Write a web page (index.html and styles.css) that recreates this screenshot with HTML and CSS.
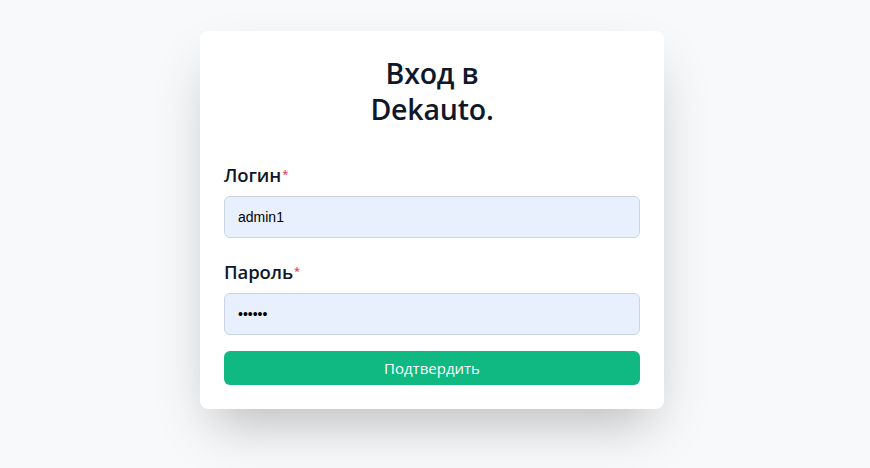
FILE: index.html
```html
<!DOCTYPE html>
<html lang="ru">
<head>
<meta charset="utf-8">
<title>Вход в Dekauto.</title>
<link rel="stylesheet" href="styles.css">
</head>
<body>
<main class="page">
  <form class="card">
    <h1 class="title">Вход в<br>Dekauto.</h1>
    <label class="label" for="login">Логин<span class="req">*</span></label>
    <input class="input" id="login" type="text" value="admin1">
    <label class="label label-second" for="pass">Пароль<span class="req">*</span></label>
    <input class="input" id="pass" type="password" value="123456">
    <button class="btn" type="button">Подтвердить</button>
  </form>
</main>
</body>
</html>
```
FILE: styles.css
```css
* { box-sizing: border-box; }
html, body { margin: 0; height: 100%; }
body {
  background: #f8f9fb;
  font-family: "Open Sans", "Noto Sans", sans-serif;
  color: #0f172a;
}
.page {
  display: flex;
  justify-content: center;
  padding: 31px 6px 0 0;
}
.card {
  width: 464px;
  background: #ffffff;
  border-radius: 8px;
  padding: 24px;
  display: flex;
  flex-direction: column;
  box-shadow: 0 25px 50px -12px rgba(0, 0, 0, 0.25);
}
.title {
  margin: 0 0 33px;
  font-size: 28.5px;
  line-height: 36px;
  font-weight: 600;
  text-align: center;
  letter-spacing: -0.2px;
}
.label {
  font-size: 18.5px;
  line-height: 28px;
  font-weight: 600;
  margin-bottom: 7px;
  letter-spacing: -0.1px;
}
.label-second { margin-top: 19px; }
.req {
  color: #f43f5e;
  font-size: 11px;
  vertical-align: 4px;
  margin-left: 1px;
}
.input {
  height: 42px;
  width: 100%;
  border: 1px solid #cbd5e1;
  border-radius: 6px;
  background: #e8f0fe;
  padding: 0 13px;
  font-family: "Liberation Sans", Arial, sans-serif;
  font-size: 14px;
  color: #000;
  outline: none;
}
.btn {
  margin-top: 16px;
  height: 34px;
  width: 100%;
  border: 0;
  border-radius: 6px;
  background: #10b981;
  color: #ffffff;
  font-family: "Open Sans", "Noto Sans", sans-serif;
  font-size: 15px;
  cursor: pointer;
}
```
